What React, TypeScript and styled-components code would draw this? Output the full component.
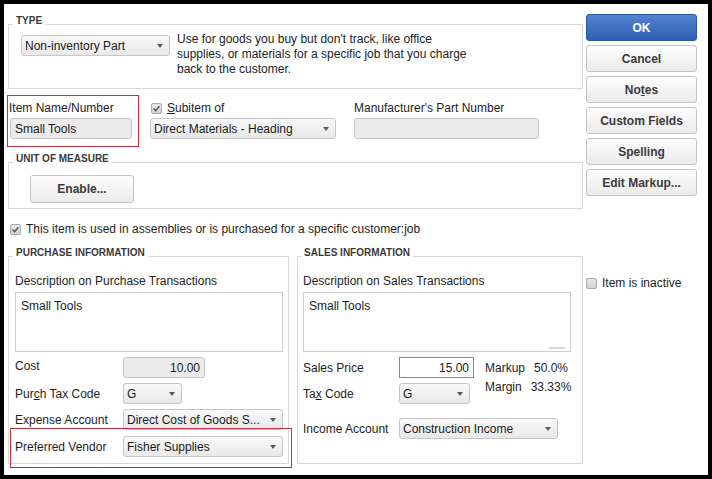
import React from 'react';
import styled, { createGlobalStyle } from 'styled-components';

const GlobalStyle = createGlobalStyle`
  html, body {
    margin: 0;
    padding: 0;
    background: #fff;
  }
  body {
    font-family: "Liberation Sans", Arial, sans-serif;
    font-size: 12px;
    color: #222;
  }
  * {
    box-sizing: border-box;
  }
`;

const Frame = styled.div`
  width: 712px;
  height: 479px;
  border: 4px solid #000;
  background: #fff;
  display: flex;
  gap: 3px;
  padding: 10px 11px 0 4px;
`;

const MainColumn = styled.div`
  width: 575px;
  display: flex;
  flex-direction: column;
`;

const SideColumn = styled.div`
  width: 111px;
  display: flex;
  flex-direction: column;
`;

const Group = styled.fieldset<{ $pl?: number; $mt?: number }>`
  margin: ${({ $mt }) => $mt ?? 0}px 0 0 0;
  padding: 0 5px 0 ${({ $pl }) => $pl ?? 6}px;
  border: 1px solid #d9d9d9;
  min-width: 0;
`;

const Legend = styled.legend`
  font-size: 10px;
  font-weight: bold;
  line-height: 10px;
  color: #3a3a3a;
  padding: 0 3px 6px;
  margin-left: -2px;
`;

const TypeBody = styled.div`
  display: flex;
  gap: 7px;
  padding: 0 0 11px 6px;
`;

const TypeText = styled.div`
  line-height: 15px;
  color: #222;
`;

const Dropdown = styled.div<{ $w: number; $mt?: number }>`
  width: ${({ $w }) => $w}px;
  height: 21px;
  margin-top: ${({ $mt }) => $mt ?? 0}px;
  flex-shrink: 0;
  border: 1px solid #c6c6c6;
  border-radius: 3px;
  background: linear-gradient(#f9f9f9, #e8e8e8);
  display: flex;
  align-items: center;
  padding: 0 6px 0 3px;
  color: #1a1a1a;
  white-space: nowrap;
`;

const Caret = styled.span`
  margin-left: auto;
  width: 0;
  height: 0;
  border-left: 3.5px solid transparent;
  border-right: 3.5px solid transparent;
  border-top: 4px solid #5a5a5a;
`;

const TextBox = styled.div<{ $w: number; $white?: boolean; $right?: boolean }>`
  width: ${({ $w }) => $w}px;
  height: 21px;
  flex-shrink: 0;
  border: 1px solid ${({ $white }) => ($white ? '#8a8a8a' : '#c6c6c6')};
  border-radius: ${({ $white }) => ($white ? 0 : 3)}px;
  background: ${({ $white }) => ($white ? '#fff' : '#ebebeb')};
  display: flex;
  align-items: center;
  justify-content: ${({ $right }) => ($right ? 'flex-end' : 'flex-start')};
  padding: 0 4px;
  color: #1a1a1a;
`;

const ItemRow = styled.div`
  display: flex;
  align-items: flex-start;
  margin-top: 6px;
`;

const RedBox = styled.div`
  border: 1px solid #c2313b;
`;

const NameBox = styled(RedBox)`
  width: 132px;
  margin-left: -1px;
  padding: 5px 6px 7px 1px;
  display: flex;
  flex-direction: column;
  gap: 3px;
`;

const VendorBox = styled(RedBox)`
  margin: -2px -9px -5px -5px;
  padding: 7px 8px 10px 4px;
  display: flex;
  align-items: center;
`;

const FieldColumn = styled.div<{ $ml: number }>`
  margin-left: ${({ $ml }) => $ml}px;
  padding-top: 6px;
  display: flex;
  flex-direction: column;
  gap: 3px;
`;

const Label = styled.span`
  line-height: 14px;
  white-space: nowrap;
  color: #1e1e1e;
`;

const CheckRow = styled.div<{ $ml?: number; $mt?: number }>`
  display: flex;
  align-items: center;
  gap: 5px;
  height: 14px;
  margin-left: ${({ $ml }) => $ml ?? 0}px;
  margin-top: ${({ $mt }) => $mt ?? 0}px;
`;

const CheckBox = styled.span`
  width: 11px;
  height: 11px;
  flex-shrink: 0;
  border: 1px solid #a9a9a9;
  border-radius: 2px;
  background: linear-gradient(#e8e8e8, #d2d2d2);
  display: flex;
  align-items: center;
  justify-content: center;
`;

const Button = styled.div<{ $primary?: boolean }>`
  height: 27px;
  display: flex;
  align-items: center;
  justify-content: center;
  border-radius: 3px;
  font-weight: bold;
  white-space: nowrap;
  border: 1px solid ${({ $primary }) => ($primary ? '#2b579f' : '#c4c4c4')};
  background: ${({ $primary }) =>
    $primary ? 'linear-gradient(#5284d4, #2f5eae)' : 'linear-gradient(#fdfdfd, #ebebeb)'};
  color: ${({ $primary }) => ($primary ? '#fff' : '#3a3a3a')};
`;

const ButtonStack = styled.div`
  display: flex;
  flex-direction: column;
  gap: 4px;
`;

const EnableButton = styled(Button)`
  width: 104px;
  height: 28px;
  margin: 5px 0 5px 15px;
`;

const InfoRow = styled.div`
  display: flex;
  gap: 8px;
  margin-top: 12px;
`;

const PurchaseGroup = styled(Group)`
  width: 281px;
  flex-shrink: 0;
`;

const SalesGroup = styled(Group)`
  flex: 1;
`;

const InfoBody = styled.div`
  display: flex;
  flex-direction: column;
  padding-top: 10px;
`;

const DescBox = styled.div<{ $w: number }>`
  width: ${({ $w }) => $w}px;
  height: 60px;
  margin: 4px 0 5px;
  border: 1px solid #cfcfcf;
  background: #fff;
  padding: 6px 5px 2px;
  display: flex;
  flex-direction: column;
  color: #1a1a1a;
  line-height: 14px;
`;

const Grip = styled.span`
  margin-top: auto;
  align-self: flex-end;
  width: 16px;
  height: 2px;
  background: #d6d6d6;
`;

const FieldRow = styled.div<{ $mt?: number }>`
  display: flex;
  align-items: center;
  margin-top: ${({ $mt }) => $mt ?? 0}px;
`;

const FieldLabel = styled(Label)<{ $w: number; $lift?: number }>`
  width: ${({ $w }) => $w}px;
  flex-shrink: 0;
  margin-top: ${({ $lift }) => -($lift ?? 0)}px;
`;

const PriceBlock = styled.div`
  display: flex;
  align-items: flex-start;
`;

const PriceFields = styled.div`
  display: flex;
  flex-direction: column;
`;

const MarkupColumn = styled.div`
  margin: 2px 0 0 11px;
  display: flex;
  flex-direction: column;
  line-height: 19px;
  color: #1e1e1e;
`;

const MarkupLine = styled.div`
  display: flex;
  gap: 9px;
  white-space: nowrap;
`;

const Check = ({ checked }: { checked?: boolean }) => (
  <CheckBox>
    {checked && (
      <svg width="9" height="9" viewBox="0 0 9 9">
        <path d="M1.6 4.6 L3.6 6.7 L7.4 2.2" fill="none" stroke="#555" strokeWidth="1.5" />
      </svg>
    )}
  </CheckBox>
);

const Select = ({ value, w, mt }: { value: string; w: number; mt?: number }) => (
  <Dropdown $w={w} $mt={mt}>
    {value}
    <Caret />
  </Dropdown>
);

const App: React.FC = () => {
  return (
    <>
      <GlobalStyle />
      <Frame>
        <MainColumn>
          <Group $mt={2}>
            <Legend>TYPE</Legend>
            <TypeBody>
              <Select value="Non-inventory Part" w={149} mt={3} />
              <TypeText>
                Use for goods you buy but don't track, like office
                <br />
                supplies, or materials for a specific job that you charge
                <br />
                back to the customer.
              </TypeText>
            </TypeBody>
          </Group>

          <ItemRow>
            <NameBox>
              <Label>Item Name/Number</Label>
              <TextBox $w={122} style={{ marginLeft: 1 }}>Small Tools</TextBox>
            </NameBox>
            <FieldColumn $ml={11}>
              <CheckRow $ml={1}>
                <Check checked />
                <Label>
                  <u>S</u>ubitem of
                </Label>
              </CheckRow>
              <Select value="Direct Materials - Heading" w={186} />
            </FieldColumn>
            <FieldColumn $ml={18}>
              <Label>Manufacturer's Part Number</Label>
              <TextBox $w={185} />
            </FieldColumn>
          </ItemRow>

          <Group $mt={7}>
            <Legend>UNIT OF MEASURE</Legend>
            <EnableButton>Enable...</EnableButton>
          </Group>

          <CheckRow $ml={2} $mt={13}>
            <Check checked />
            <Label>This item is used in assemblies or is purchased for a specific customer:job</Label>
          </CheckRow>

          <InfoRow>
            <PurchaseGroup>
              <Legend>PURCHASE INFORMATION</Legend>
              <InfoBody>
                <Label>Description on Purchase Transactions</Label>
                <DescBox $w={268}>Small Tools</DescBox>
                <FieldRow>
                  <FieldLabel $w={108} $lift={4}>Cost</FieldLabel>
                  <TextBox $w={82} $right>10.00</TextBox>
                </FieldRow>
                <FieldRow $mt={5}>
                  <FieldLabel $w={108}>
                    Pur<u>c</u>h Tax Code
                  </FieldLabel>
                  <Select value="G" w={59} />
                </FieldRow>
                <FieldRow $mt={5}>
                  <FieldLabel $w={108}>Expense Account</FieldLabel>
                  <Select value="Direct Cost of Goods S..." w={160} />
                </FieldRow>
                <VendorBox>
                  <FieldLabel $w={108}>Preferred Vendor</FieldLabel>
                  <Select value="Fisher Supplies" w={160} />
                </VendorBox>
              </InfoBody>
            </PurchaseGroup>

            <SalesGroup $pl={5}>
              <Legend>SALES INFORMATION</Legend>
              <InfoBody>
                <Label>Description on Sales Transactions</Label>
                <DescBox $w={268}>
                  Small Tools
                  <Grip />
                </DescBox>
                <PriceBlock>
                  <PriceFields>
                    <FieldRow>
                      <FieldLabel $w={96}>Sales Price</FieldLabel>
                      <TextBox $w={75} $white $right>15.00</TextBox>
                    </FieldRow>
                    <FieldRow $mt={5}>
                      <FieldLabel $w={96}>
                        Ta<u>x</u> Code
                      </FieldLabel>
                      <Select value="G" w={71} />
                    </FieldRow>
                  </PriceFields>
                  <MarkupColumn>
                    <MarkupLine>
                      <span>Markup</span>
                      <span>50.0%</span>
                    </MarkupLine>
                    <MarkupLine>
                      <span>Margin</span>
                      <span>33.33%</span>
                    </MarkupLine>
                  </MarkupColumn>
                </PriceBlock>
                <FieldRow $mt={14}>
                  <FieldLabel $w={96}>Income Account</FieldLabel>
                  <Select value="Construction Income" w={159} />
                </FieldRow>
              </InfoBody>
            </SalesGroup>
          </InfoRow>
        </MainColumn>

        <SideColumn>
          <ButtonStack>
            <Button $primary>OK</Button>
            <Button>Cancel</Button>
            <Button>
              No<u>t</u>es
            </Button>
            <Button>Custom Fields</Button>
            <Button>
              Spellin<u>g</u>
            </Button>
            <Button>Edit Markup...</Button>
          </ButtonStack>
          <CheckRow $mt={80}>
            <Check />
            <Label>Item is inactive</Label>
          </CheckRow>
        </SideColumn>
      </Frame>
    </>
  );
};

export default App;
